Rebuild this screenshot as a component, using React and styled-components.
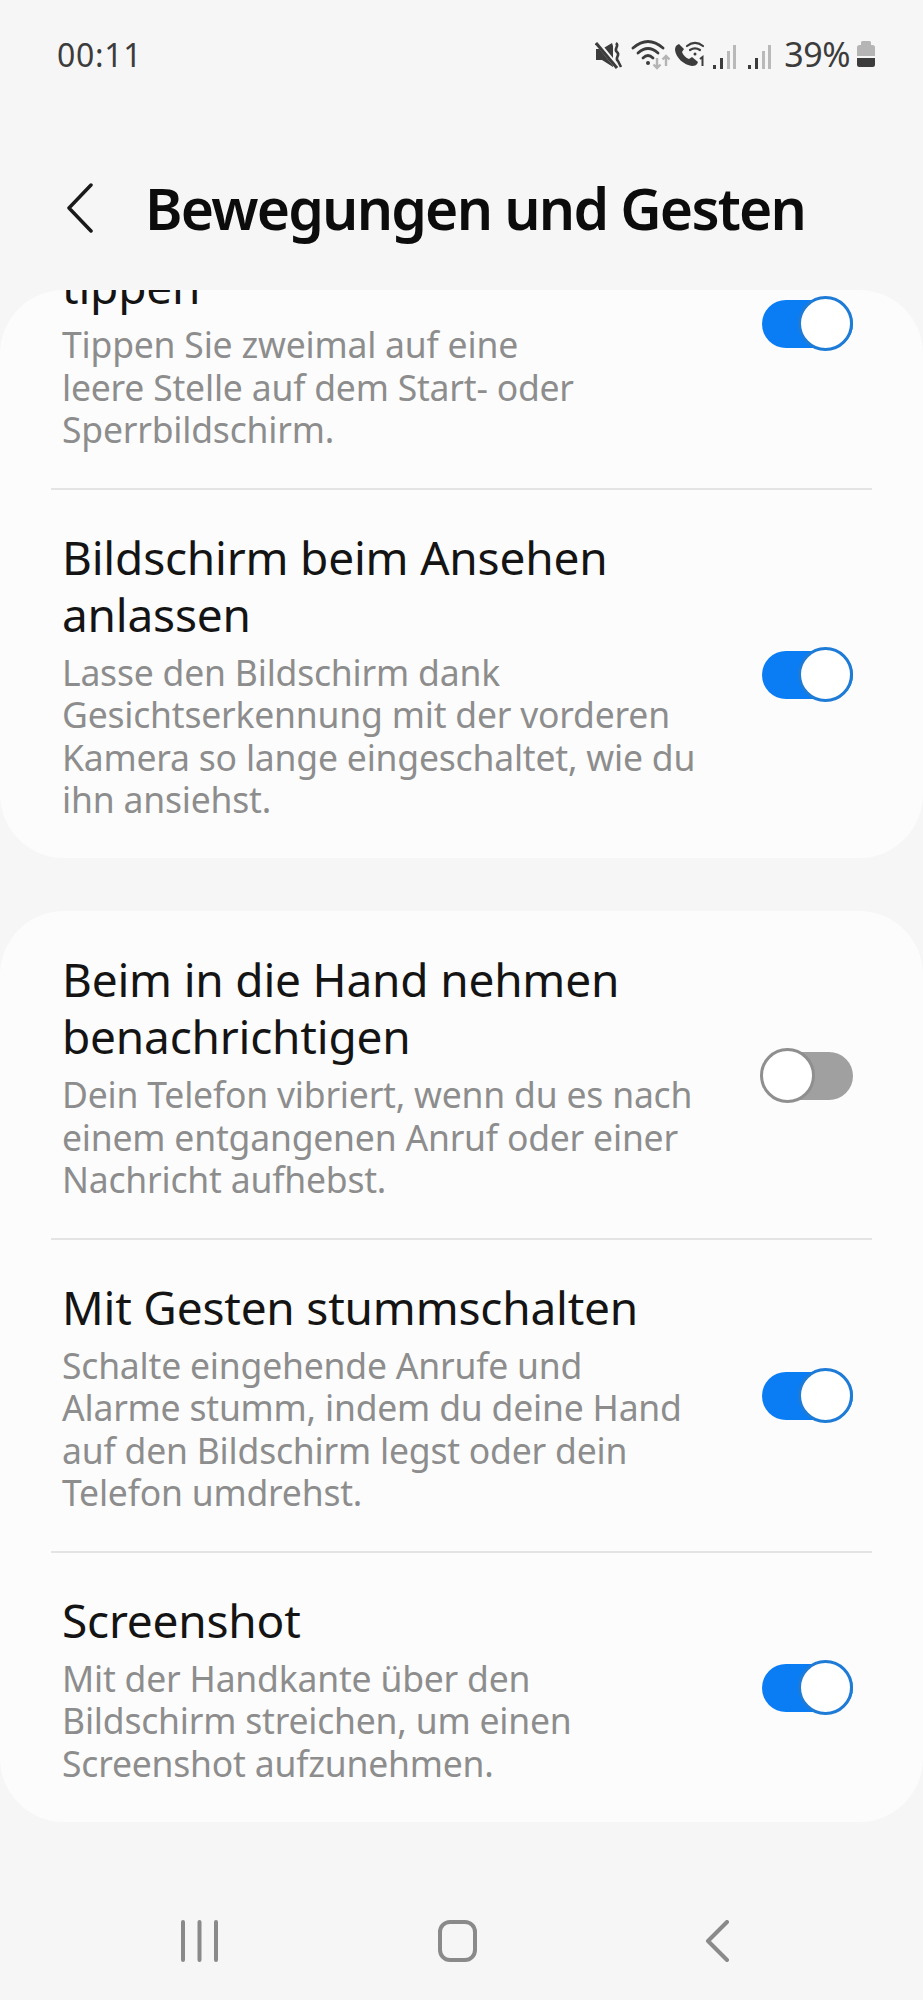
import React from "react";
import styled, { createGlobalStyle } from "styled-components";

const Global = createGlobalStyle`
  html, body { margin: 0; padding: 0; background: #f6f6f6; }
  * { box-sizing: border-box; }
`;
const Page = styled.div`
  width: 923px; height: 2000px; background: #f6f6f6; overflow: hidden;
  display: flex; flex-direction: column;
  font-family: "Noto Sans", "Open Sans", sans-serif;
`;
const StatusBar = styled.div`
  height: 108px; padding: 0 48px 0 57px; display: flex; align-items: center; justify-content: space-between; color: #3c3c3c;
`;
const Clock = styled.span`font-size: 32px; letter-spacing: 0.7px;`;
const StatusRight = styled.div`display: flex; align-items: center;`;
const StatusGlyphs = styled.svg`display: block; flex: none;`;
const BatteryGlyph = styled.svg`display: block; flex: none;`;
const Percent = styled.span`font-size: 34px; margin: 0 7px; letter-spacing: -0.5px;`;
const Header = styled.header`
  height: 182px; padding: 18px 0 0 64px; display: flex; align-items: center;
`;
const Heading = styled.h1`
  margin: 0 0 0 41px; font-size: 57px; font-weight: 600; color: #0c0c0c; letter-spacing: -1.8px; white-space: nowrap;
`;
const Card = styled.section`
  background: #fcfcfc; border-radius: 64px; overflow: hidden; flex: none;
  ${p => p.$height ? `height: ${p.$height}px; margin-bottom: 53px;` : ""}
`;
const Row = styled.div`
  display: flex; align-items: center; justify-content: space-between;
  padding: 40px 70px 38px 62px;
  margin-top: ${p => p.$clip ? "-132px" : "0"};
`;
const Divider = styled.div`height: 2px; margin: -1px 51px -1px; background: #e4e4e4;`;
const RowText = styled.div`white-space: nowrap; padding-top: ${p => p.$clip ? "60px" : "0"};`;
const Title = styled.div`font-size: 46px; line-height: 57px; color: #141414; letter-spacing: -0.2px; margin-bottom: 8px;`;
const Sub = styled.div`font-size: 35.5px; line-height: 42.5px; color: #8d8d8d; letter-spacing: -0.2px;`;
const Track = styled.div`
  position: relative; width: 93px; height: 48px; flex: none;
`;
const Fill = styled.div`
  position: absolute; top: 0; bottom: 0; left: ${p => p.$on ? "2px" : "10px"}; right: 0; border-radius: 24px;
  background: ${p => p.$on ? "#0a7df5" : "#a0a0a0"};
`;
const Knob = styled.div`
  position: absolute; top: -4px; width: 55px; height: 55px; border-radius: 50%; background: #fff;
  ${p => p.$on ? "right: 0;" : "left: 0;"}
  border: 3px solid ${p => p.$on ? "#1e7bd6" : "#8f8f8f"};
`;
const Nav = styled.nav`
  flex: 1; display: flex; align-items: flex-start; padding: 98px 0 0 181px;
`;
const NavIcon = styled.svg`
  flex: none; margin-left: ${p => p.$gap || 0}px; fill: none; stroke: #8a8a8a; stroke-width: 4; stroke-linecap: round; stroke-linejoin: round;
`;

const Toggle = ({ on }) => (
  <Track><Fill $on={on} /><Knob $on={on} /></Track>
);

const Lines = ({ items }) => items.map((t, i) => <div key={i}>{t}</div>);

const Setting = ({ title, sub, on, clip }) => (
  <Row $clip={clip}>
    <RowText $clip={clip}>
      <Title><Lines items={title} /></Title>
      <Sub><Lines items={sub} /></Sub>
    </RowText>
    <Toggle on={on} />
  </Row>
);

const Bars = ({ x }) => (
  <g transform={`translate(${x} 0)`}>
    <rect x="0" y="25" width="3" height="4" fill="#3c3c3c" />
    <rect x="7" y="18" width="3" height="11" fill="#3c3c3c" />
    <rect x="14" y="11" width="3" height="18" fill="#b9b9b9" />
    <rect x="20" y="5" width="3" height="24" fill="#b9b9b9" />
  </g>
);

const StatusIcons = () => (
  <StatusGlyphs width="182" height="32" viewBox="0 0 182 32">
    <g transform="translate(0 2)">
      {/* mute */}
      <path d="M1 9h6l10-6 1 3v21l-11-7H1z" fill="#3c3c3c" />
      <path d="M1 1l22 27" stroke="#f6f6f6" strokeWidth="5" />
      <path d="M1 3l21 25" stroke="#3c3c3c" strokeWidth="3" />
      <path d="M21 3c4 3-3 6 1 9s-3 6 1 9l3 6" fill="none" stroke="#3c3c3c" strokeWidth="2.6" />
      {/* wifi */}
      <g fill="none" stroke="#3c3c3c" strokeWidth="2.8" strokeLinecap="round">
        <path d="M38 8Q53-5 68 8" />
        <path d="M43 13Q53 4 63 13" />
        <path d="M48 18Q53 13 58 18" />
      </g>
      <circle cx="53" cy="23" r="2" fill="#3c3c3c" />
      <path d="M62 18v10m-3.500-3.500l3.500 3.500 3.500-3.500" fill="none" stroke="#b4b4b4" strokeWidth="2.400" />
      <path d="M71 26V16m-3.500 3.500l3.500-3.500 3.500 3.500" fill="none" stroke="#b4b4b4" strokeWidth="2.400" />
      {/* call */}
      <path d="M84 4c-3 1-4 3-4 6 1 8 9 15 17 16 3 0 5-1 6-4l-6-5-3 2c-3-1-6-4-7-7l2-3z" fill="#3c3c3c" />
      <g fill="none" stroke="#3c3c3c" strokeWidth="2.200" strokeLinecap="round">
        <path d="M92 6c5-4 11-4 16 0" />
        <path d="M95 10c3-2 7-2 10 0" />
      </g>
      <circle cx="100" cy="14" r="1.500" fill="#3c3c3c" />
      <path d="M105 19l2.500-2v9" fill="none" stroke="#3c3c3c" strokeWidth="2" />
      {/* signal */}
      <Bars x={118} />
      <Bars x={153} />
    </g>
  </StatusGlyphs>
);

const Battery = () => (
  <BatteryGlyph width="18" height="26" viewBox="0 0 18 26">
    <path d="M4 4V1.500Q4 0 5.500 0h7Q14 0 14 1.500V4h1.500A2.500 2.500 0 0 1 18 6.500V15H0V6.500A2.500 2.500 0 0 1 2.500 4z" fill="#b5b5b5" />
    <path d="M0 17h18v6.500a2.500 2.500 0 0 1-2.500 2.500h-13A2.500 2.500 0 0 1 0 23.500z" fill="#3c3c3c" />
  </BatteryGlyph>
);

export default function App() {
  return (
    <Page>
      <Global />
      <StatusBar>
        <Clock>00:11</Clock>
        <StatusRight>
          <StatusIcons />
          <Percent>39%</Percent>
          <Battery />
        </StatusRight>
      </StatusBar>
      <Header>
        <svg width="40" height="50" viewBox="0 0 40 50" fill="none" stroke="#1a1a1a" strokeWidth="3.500" strokeLinecap="round" strokeLinejoin="round">
          <path d="M27 2L5 25l22 23" />
        </svg>
        <Heading>Bewegungen und Gesten</Heading>
      </Header>
      <Card $height={568}>
        <Setting clip title={["tippen"]} sub={["Tippen Sie zweimal auf eine", "leere Stelle auf dem Start- oder", "Sperrbildschirm."]} on />
        <Divider />
        <Setting title={["Bildschirm beim Ansehen", "anlassen"]} sub={["Lasse den Bildschirm dank", "Gesichtserkennung mit der vorderen", "Kamera so lange eingeschaltet, wie du", "ihn ansiehst."]} on />
      </Card>
      <Card>
        <Setting title={["Beim in die Hand nehmen", "benachrichtigen"]} sub={["Dein Telefon vibriert, wenn du es nach", "einem entgangenen Anruf oder einer", "Nachricht aufhebst."]} />
        <Divider />
        <Setting title={["Mit Gesten stummschalten"]} sub={["Schalte eingehende Anrufe und", "Alarme stumm, indem du deine Hand", "auf den Bildschirm legst oder dein", "Telefon umdrehst."]} on />
        <Divider />
        <Setting title={["Screenshot"]} sub={["Mit der Handkante über den", "Bildschirm streichen, um einen", "Screenshot aufzunehmen."]} on />
      </Card>
      <Nav>
        <NavIcon width="37" height="42" viewBox="0 0 37 42"><path d="M2 2v38M18.500 2v38M35 2v38" /></NavIcon>
        <NavIcon $gap={218} width="43" height="42" viewBox="0 0 43 42"><rect x="4" y="2" width="35" height="38" rx="10" /></NavIcon>
        <NavIcon $gap={225} width="26" height="42" viewBox="0 0 26 42"><path d="M23 2L4 21l19 19" /></NavIcon>
      </Nav>
    </Page>
  );
}
